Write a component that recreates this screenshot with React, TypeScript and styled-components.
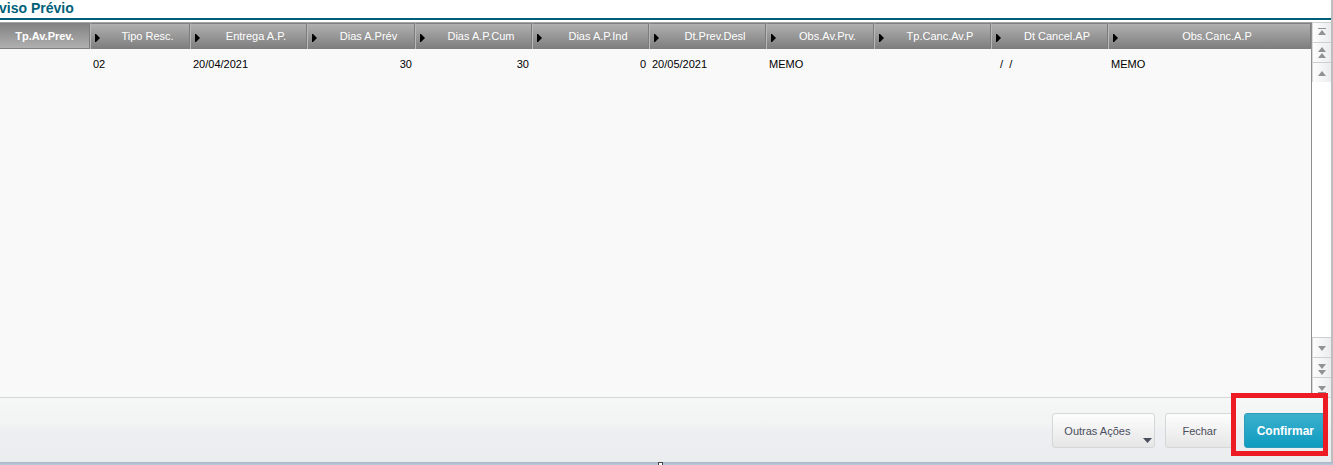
import { ButtonHTMLAttributes } from "react";
import styled, { createGlobalStyle, css } from "styled-components";

const colorTeal = "#005f78";
const colorBg = "#f9f9f9";
const colorLine = "#d4d6d7";
const colorText = "#4a4d5c";
const fontUi = `"Liberation Sans", Arial, sans-serif`;

const GlobalStyle = createGlobalStyle`
  *, *::before, *::after {
    box-sizing: border-box;
  }

  body {
    background-color: #ffffff;
    font-family: ${fontUi};
    font-size: 11px;
    margin: 0;
  }
`;

const Page = styled.div`
  display: flex;
  flex-flow: column nowrap;
  min-height: 100vh;
  overflow: hidden;
`;

const Window = styled.div`
  border-inline-end: 2px solid #bebebe;
  display: flex;
  flex: 1;
  flex-flow: column nowrap;
`;

const Title = styled.h1`
  border-block-end: 2px solid ${colorTeal};
  color: ${colorTeal};
  font-size: 14px;
  height: 20px;
  line-height: 16px;
  margin: 0;
  text-indent: -1px;
`;

const Browse = styled.main`
  display: flex;
  flex: 1;
  margin-block-start: 2px;
`;

const Grid = styled.div`
  background-color: ${colorBg};
  border-block-start: 1px solid #a6a6a6;
  border-inline-end: 1px solid #8e8e8e;
  flex: 1;
  min-width: 0;
`;

const Table = styled.table`
  border-collapse: separate;
  border-spacing: 0;
  table-layout: fixed;
  width: 100%;
`;

const Head = styled.th<{ $active?: boolean }>`
  background: linear-gradient(#b0b0b0, #7d7d7d);
  border-block-start: 1px solid #808080;
  border-inline-end: 1px solid #7c7c7c;
  border-inline-start: 1px solid #b8b8b8;
  color: #ffffff;
  font-weight: normal;
  height: 26px;
  padding: 0 0 1px 4px;

  ${({ $active }) =>
    $active &&
    css`
      background: linear-gradient(#838383, #b0b0b0);
      border-block-end: 1px solid #808080;
      border-inline-start: 0;
      font-weight: bold;
      padding: 0;
    `}
`;

const HeadContent = styled.div`
  align-items: center;
  display: flex;
`;

const Label = styled.span`
  flex: 1;
  line-height: 24px;
  text-align: center;
  white-space: nowrap;
`;

const SortIcon = styled.svg`
  height: 8px;
  margin-block-start: 3px;
  margin-inline-end: 6px;
  width: 5px;
`;

const Cell = styled.td<{ $numeric?: boolean }>`
  color: #000000;
  height: 30px;
  padding: 0 3px;
  text-align: ${({ $numeric }) => ($numeric ? "right" : "left")};
  white-space: pre;
`;

const Scroller = styled.div`
  display: flex;
  flex-flow: column nowrap;
  justify-content: space-between;
  width: 19px;
`;

const ScrollGroup = styled.div`
  display: flex;
  flex-flow: column nowrap;
`;

const ScrollButton = styled.button`
  align-items: center;
  background: linear-gradient(to right, #fdfdfd, #ebecee);
  border: 0;
  border-block-start: 1px solid #cfcfcf;
  border-inline-start: 1px solid #d8d8d8;
  display: flex;
  height: 20px;
  justify-content: center;
  padding: 0;
`;

const Footer = styled.footer`
  background: linear-gradient(#f6f7f7, #f1f4f2 40%, #eeeff2 50%, #eaecee);
  border-block-start: 1px solid ${colorLine};
  display: flex;
  gap: 10px;
  justify-content: flex-end;
  padding: 15px 4px 14px;
`;

const Button = styled.button<{ $primary?: boolean }>`
  background: linear-gradient(#fdfdfd, #e6e6e6);
  border: 1px solid ${colorLine};
  border-radius: 3px;
  color: ${colorText};
  font-family: ${fontUi};
  font-size: 11px;
  height: 35px;
  padding: 0 16px;

  ${({ $primary }) =>
    $primary &&
    css`
      background: linear-gradient(#3cb0cd, #0f9bc0);
      border-color: #2a9dbb;
      color: #ffffff;
      font-size: 12px;
      font-weight: bold;
      padding: 0 12px;
    `}
`;

const MenuButton = styled(Button)`
  padding: 0 24px 0 11px;
  position: relative;
`;

const MenuIcon = styled.svg`
  inset-block-end: 4px;
  inset-inline-end: 2px;
  position: absolute;
`;

const Highlight = styled.div`
  position: relative;

  &::after {
    border: 5px solid #ed1c24;
    content: "";
    inset: -20px -1px -8px -13px;
    pointer-events: none;
    position: absolute;
  }
`;

const BottomEdge = styled.div`
  background: linear-gradient(#a9b4c8, #bccadd);
  height: 3px;
  overflow: hidden;
  position: relative;
`;

const Handle = styled.span`
  background-color: #ffffff;
  border: 1px solid #444444;
  height: 5px;
  inset-block-start: 0;
  inset-inline-start: calc(50% - 9px);
  position: absolute;
  width: 5px;
`;

interface Column {
  label: string;
  value: string;
  width?: number;
  numeric?: boolean;
}

const columns: Column[] = [
  { label: "Tp.Av.Prev.", value: "", width: 90 },
  { label: "Tipo Resc.", value: "02", width: 100 },
  { label: "Entrega A.P.", value: "20/04/2021", width: 117 },
  { label: "Dias A.Prév", value: "30", width: 108, numeric: true },
  { label: "Dias A.P.Cum", value: "30", width: 117, numeric: true },
  { label: "Dias A.P.Ind", value: "0", width: 117, numeric: true },
  { label: "Dt.Prev.Desl", value: "20/05/2021", width: 117 },
  { label: "Obs.Av.Prv.", value: "MEMO", width: 108 },
  { label: "Tp.Canc.Av.P", value: "", width: 117 },
  { label: "Dt Cancel.AP", value: "  /  /", width: 117 },
  { label: "Obs.Canc.A.P", value: "MEMO" },
];

const arrows = {
  top: "M5 4h8v1H5zM9 6l4 5H5z",
  pageUp: "M9 3l4 5H5zM9 9l4 5H5z",
  up: "M9 7l4 5H5z",
  down: "M5 7h8l-4 5z",
  pageDown: "M5 5h8l-4 5zM5 11h8l-4 5z",
  bottom: "M5 7h8l-4 5zM5 13h8v1H5z",
};

interface ScrollProps extends ButtonHTMLAttributes<HTMLButtonElement> {
  arrow: keyof typeof arrows;
}

function Scroll({ arrow, ...props }: ScrollProps) {
  return (
    <ScrollButton type="button" {...props}>
      <svg width="18" height="18" viewBox="0 0 18 18" aria-hidden="true">
        <path d={arrows[arrow]} fill="#929292" />
      </svg>
    </ScrollButton>
  );
}

export default function App() {
  return (
    <Page>
      <GlobalStyle />
      <Window>
        <Title>viso Prévio</Title>
        <Browse>
          <Grid>
            <Table>
              <colgroup>
                {columns.map(({ label, width }) => (
                  <col key={label} width={width} />
                ))}
              </colgroup>
              <thead>
                <tr>
                  {columns.map(({ label }, index) => (
                    <Head key={label} scope="col" $active={index === 0}>
                      <HeadContent>
                        {index > 0 && (
                          <SortIcon viewBox="0 0 5 8" aria-hidden="true">
                            <path d="M0 0h1l4 4-4 4H0z" />
                          </SortIcon>
                        )}
                        <Label>{label}</Label>
                      </HeadContent>
                    </Head>
                  ))}
                </tr>
              </thead>
              <tbody>
                <tr>
                  {columns.map(({ label, value, numeric }) => (
                    <Cell key={label} $numeric={numeric}>
                      {value}
                    </Cell>
                  ))}
                </tr>
              </tbody>
            </Table>
          </Grid>
          <Scroller>
            <ScrollGroup>
              <Scroll arrow="top" aria-label="Primeiro" />
              <Scroll arrow="pageUp" aria-label="Página anterior" />
              <Scroll arrow="up" aria-label="Anterior" />
            </ScrollGroup>
            <ScrollGroup>
              <Scroll arrow="down" aria-label="Próximo" />
              <Scroll arrow="pageDown" aria-label="Próxima página" />
              <Scroll arrow="bottom" aria-label="Último" />
            </ScrollGroup>
          </Scroller>
        </Browse>
        <Footer>
          <MenuButton type="button">
            Outras Ações
            <MenuIcon width="9" height="5" viewBox="0 0 9 5" aria-hidden="true">
              <path d="M0 0h9L4.5 5z" fill={colorText} />
            </MenuIcon>
          </MenuButton>
          <Button type="button">Fechar</Button>
          <Highlight>
            <Button type="button" $primary>
              Confirmar
            </Button>
          </Highlight>
        </Footer>
      </Window>
      <BottomEdge>
        <Handle />
      </BottomEdge>
    </Page>
  );
}
